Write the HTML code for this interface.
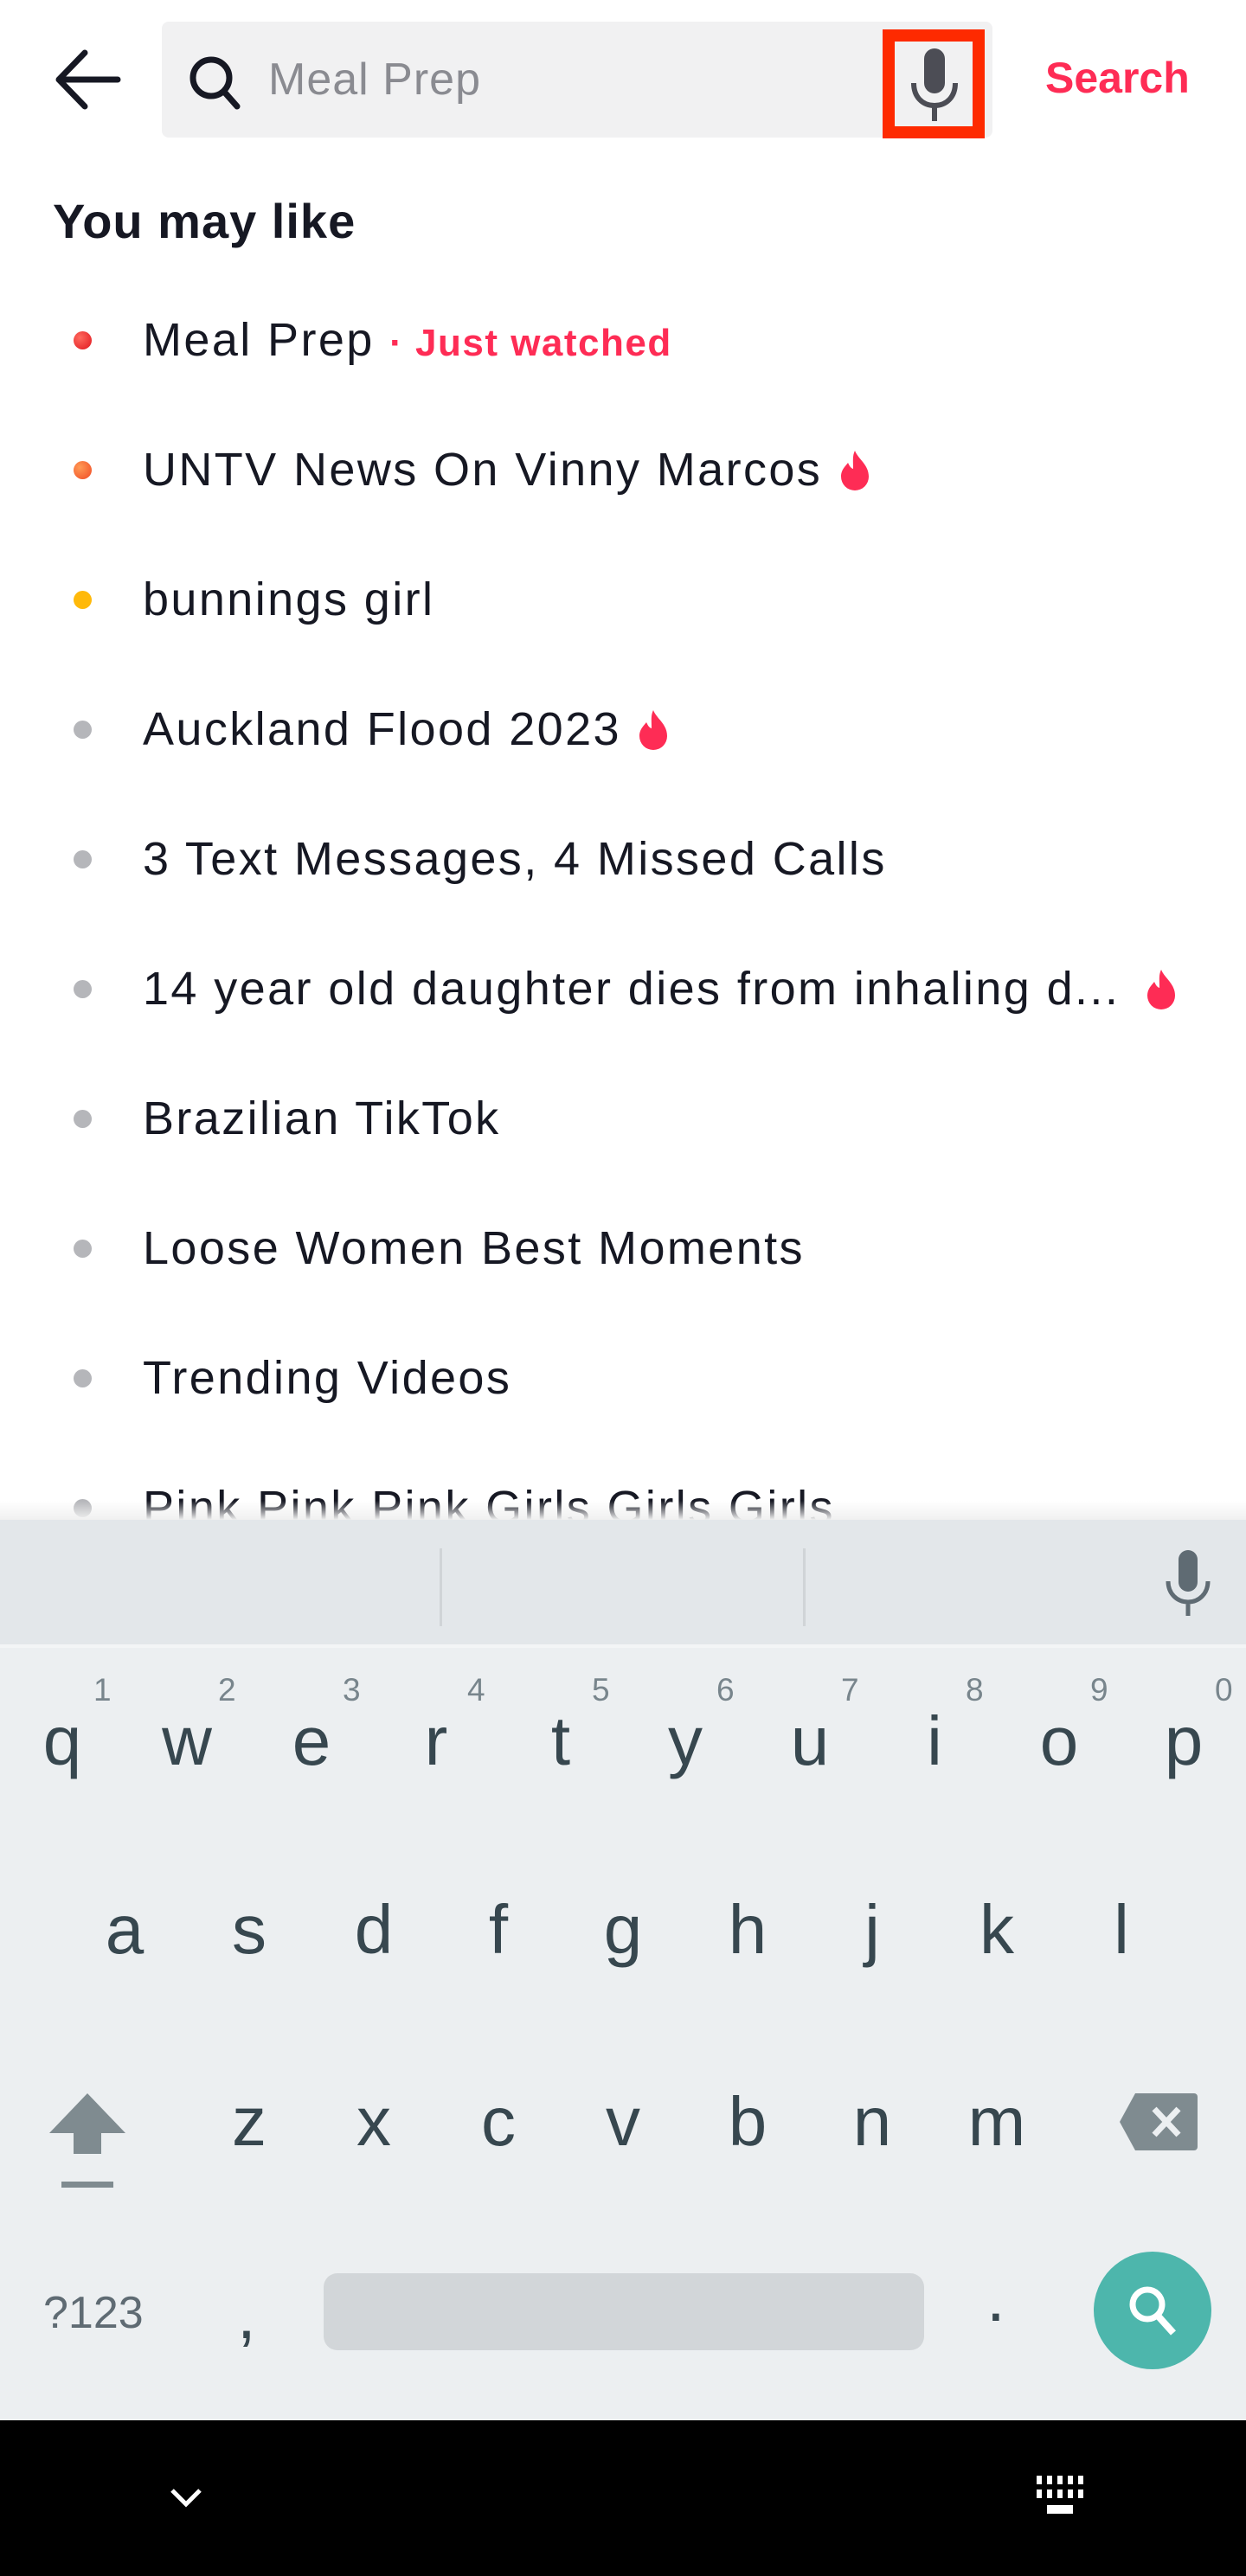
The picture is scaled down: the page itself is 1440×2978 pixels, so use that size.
<!DOCTYPE html>
<html><head><meta charset="utf-8"><style>
*{margin:0;padding:0;box-sizing:border-box}
body{width:1440px;height:2978px;position:relative;background:#fff;font-family:"Liberation Sans",Arial,sans-serif;overflow:hidden;color:#161823}
.abs{position:absolute}
.sbox{left:187px;top:25px;width:960px;height:134px;background:#f1f1f2;border-radius:8px}
.ph{left:310px;top:62px;font-size:52px;letter-spacing:1px;color:#8a8b91;line-height:60px}
.srch{left:1208px;top:60px;font-size:50px;font-weight:bold;color:#fe2c55;line-height:60px}
.h{left:61px;top:226px;font-size:56px;letter-spacing:1px;font-weight:bold;line-height:60px}
.row{position:absolute;left:0;width:1440px;height:60px}
.dot{position:absolute;left:85px;top:20px;width:21px;height:21px;border-radius:50%;background:#b5b6ba}
.t{position:absolute;left:165px;top:0;font-size:54px;letter-spacing:2.4px;line-height:60px;white-space:nowrap}
.jw{color:#fe2c55;font-weight:bold;font-size:44px;letter-spacing:1.5px}
.kb{left:0;top:1757px;width:1440px;height:1041px;background:#eceff1}
.strip{left:0;top:1757px;width:1440px;height:148px;background:#e3e7ea;border-bottom:4px solid #f3f5f6}
.k{position:absolute;width:144px;text-align:center;font-size:80px;color:#37474f;line-height:90px}
.n{position:absolute;font-size:37px;color:#78858c;line-height:40px}
.nav{left:0;top:2798px;width:1440px;height:180px;background:#000}
</style></head><body>
<svg class="abs" style="left:60px;top:55px" width="80" height="75" viewBox="0 0 80 75"><path d="M76 37H8M38 6L8 37l30 31" fill="none" stroke="#161823" stroke-width="7" stroke-linecap="round" stroke-linejoin="round"/></svg>
<div class="abs sbox"></div>
<svg class="abs" style="left:214px;top:60px" width="70" height="70" viewBox="0 0 70 70"><circle cx="30" cy="30" r="21" fill="none" stroke="#161823" stroke-width="7"/><path d="M45 46l15 17" stroke="#161823" stroke-width="7" stroke-linecap="round"/></svg>
<div class="abs ph">Meal Prep</div>
<div class="abs" style="left:1020px;top:34px;width:118px;height:126px;border:14px solid #fe2a00"></div>
<svg class="abs" style="left:1048px;top:52px" width="64" height="92" viewBox="0 0 64 92"><rect x="20" y="4" width="24" height="52" rx="12" fill="#4c4d55"/><path d="M8 44c0 16 10 26 24 26s24-10 24-26M32 70v18" fill="none" stroke="#4c4d55" stroke-width="6"/></svg>
<div class="abs srch">Search</div>
<div class="abs h">You may like</div>

<div class="row" style="top:363px"><div class="dot" style="background:radial-gradient(circle at 35% 35%,#ff6a5e,#e0161e)"></div><div class="t">Meal Prep <span class="jw">· Just watched</span></div></div>
<div class="row" style="top:513px"><div class="dot" style="background:radial-gradient(circle at 35% 35%,#ff9a55,#f04a24)"></div><div class="t">UNTV News On Vinny Marcos <svg width="40" height="48" viewBox="0 0 40 48" style="vertical-align:-6px"><path d="M20 2C24 12 36 18 36 32a16 16 0 0 1-32 0c0-8 5-12 8-16 2 4 3 6 6 7C18 14 17 8 20 2z" fill="#fe2c55"/></svg></div></div>
<div class="row" style="top:663px"><div class="dot" style="background:#ffb90a"></div><div class="t">bunnings girl</div></div>
<div class="row" style="top:813px"><div class="dot"></div><div class="t">Auckland Flood 2023 <svg width="40" height="48" viewBox="0 0 40 48" style="vertical-align:-6px"><path d="M20 2C24 12 36 18 36 32a16 16 0 0 1-32 0c0-8 5-12 8-16 2 4 3 6 6 7C18 14 17 8 20 2z" fill="#fe2c55"/></svg></div></div>
<div class="row" style="top:963px"><div class="dot"></div><div class="t">3 Text Messages, 4 Missed Calls</div></div>
<div class="row" style="top:1113px"><div class="dot"></div><div class="t">14 year old daughter dies from inhaling d...</div><svg class="abs" style="left:1322px;top:6px" width="40" height="48" viewBox="0 0 40 48"><path d="M20 2C24 12 36 18 36 32a16 16 0 0 1-32 0c0-8 5-12 8-16 2 4 3 6 6 7C18 14 17 8 20 2z" fill="#fe2c55"/></svg></div>
<div class="row" style="top:1263px"><div class="dot"></div><div class="t">Brazilian TikTok</div></div>
<div class="row" style="top:1413px"><div class="dot"></div><div class="t">Loose Women Best Moments</div></div>
<div class="row" style="top:1563px"><div class="dot"></div><div class="t">Trending Videos</div></div>
<div class="row" style="top:1713px"><div class="dot"></div><div class="t">Pink Pink Pink Girls Girls Girls</div></div>
<div class="abs" style="left:0;top:1735px;width:1440px;height:22px;background:linear-gradient(rgba(255,255,255,0),rgba(240,240,240,1))"></div>

<div class="abs kb"></div>
<div class="abs strip"></div>
<div class="abs" style="left:508px;top:1790px;width:3px;height:90px;background:#d0d4d7"></div>
<div class="abs" style="left:928px;top:1790px;width:3px;height:90px;background:#d0d4d7"></div>
<svg class="abs" style="left:1345px;top:1790px" width="56" height="80" viewBox="0 0 56 80"><rect x="17" y="2" width="22" height="48" rx="11" fill="#5f6b73"/><path d="M5 38c0 14 10 24 23 24s23-10 23-24M28 62v16" fill="none" stroke="#5f6b73" stroke-width="5"/></svg>

<script>
function row(letters,x0,y,nums){letters.split('').forEach(function(c,i){var d=document.createElement('div');d.className='k';d.style.left=(x0+i*144-72)+'px';d.style.top=(y-52)+'px';d.textContent=c;document.body.appendChild(d);if(nums){var n=document.createElement('div');n.className='n';n.style.left=(x0+i*144+36)+'px';n.style.top=(y-86)+'px';n.textContent=nums[i];document.body.appendChild(n);}});}
row('qwertyuiop',72,2020,'1234567890');
row('asdfghjkl',144,2238);
row('zxcvbnm',288,2460);
</script>
<svg class="abs" style="left:55px;top:2418px" width="92" height="115" viewBox="0 0 92 115"><path d="M46 2L90 48H62V72H30V48H2z" fill="#7f8b90"/><rect x="16" y="104" width="60" height="7" fill="#7f8b90"/></svg>
<svg class="abs" style="left:1292px;top:2418px" width="94" height="70" viewBox="0 0 94 70"><path d="M20 2H88a4 4 0 0 1 4 4V64a4 4 0 0 1-4 4H20L2 35z" fill="#7f8b90"/><path d="M42 20l28 30M70 20L42 50" stroke="#eceff1" stroke-width="7"/></svg>
<div class="abs" style="left:50px;top:2644px;font-size:52px;color:#5f6b73;line-height:60px">?123</div>
<div class="abs" style="left:274px;top:2636px;font-size:78px;color:#37474f;line-height:80px">,</div>
<div class="abs" style="left:374px;top:2628px;width:694px;height:89px;background:#d2d6d9;border-radius:16px"></div>
<div class="abs" style="left:1140px;top:2616px;font-size:78px;color:#37474f;line-height:80px">.</div>
<div class="abs" style="left:1264px;top:2603px;width:136px;height:136px;border-radius:50%;background:#4db6ac"></div>
<svg class="abs" style="left:1298px;top:2636px" width="70" height="70" viewBox="0 0 70 70"><circle cx="28" cy="28" r="17" fill="none" stroke="#fff" stroke-width="7"/><path d="M40 41l18 20" stroke="#fff" stroke-width="8"/></svg>

<div class="abs nav"></div>
<svg class="abs" style="left:195px;top:2875px" width="40" height="26" viewBox="0 0 40 26"><path d="M4 4l16 16 16-16" fill="none" stroke="#fff" stroke-width="5"/></svg>
<svg class="abs" style="left:1196px;top:2860px" width="60" height="52" viewBox="0 0 60 52"><g fill="#fff"><rect x="2" y="2" width="6" height="10"/><rect x="14" y="2" width="6" height="10"/><rect x="26" y="2" width="6" height="10"/><rect x="38" y="2" width="6" height="10"/><rect x="50" y="2" width="6" height="10"/><rect x="2" y="18" width="6" height="10"/><rect x="14" y="18" width="6" height="10"/><rect x="26" y="18" width="6" height="10"/><rect x="38" y="18" width="6" height="10"/><rect x="50" y="18" width="6" height="10"/><rect x="14" y="36" width="30" height="10"/></g></svg>
</body></html>
